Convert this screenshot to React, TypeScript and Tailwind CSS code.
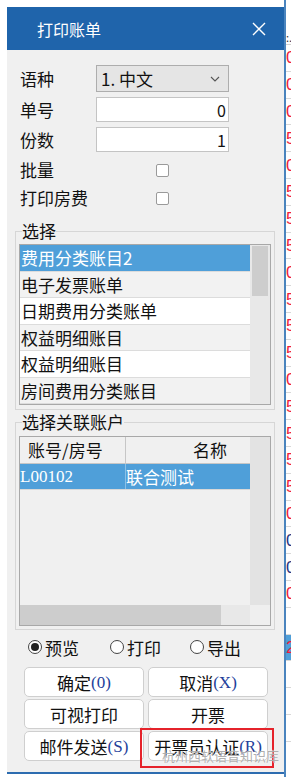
import React from "react";

const cjk = { fontFamily: '"Noto Sans CJK SC", "Noto Sans", sans-serif' };

const listItems = [
  "费用分类账目2",
  "电子发票账单",
  "日期费用分类账单",
  "权益明细账目",
  "权益明细账目",
  "房间费用分类账目",
  "房间费用明细",
];

// background grid digits peeking out on the right edge
const stripRows: { t: string; c: string; sel?: boolean }[] = [
  { t: "0", c: "text-[#f01c3c]" },
  { t: "0", c: "text-[#f01c3c]" },
  { t: "0", c: "text-[#f01c3c]" },
  { t: "5", c: "text-[#f01c3c]" },
  { t: "0", c: "text-[#f01c3c]" },
  { t: "5", c: "text-[#f01c3c]" },
  { t: "5", c: "text-[#f01c3c]" },
  { t: "5", c: "text-[#f01c3c]" },
  { t: "0", c: "text-[#f01c3c]" },
  { t: "5", c: "text-[#f01c3c]" },
  { t: "5", c: "text-[#f01c3c]" },
  { t: "5", c: "text-[#f01c3c]" },
  { t: "0", c: "text-[#f01c3c]" },
  { t: "5", c: "text-[#f01c3c]" },
  { t: "5", c: "text-[#f01c3c]" },
  { t: "5", c: "text-[#f01c3c]" },
  { t: "5", c: "text-[#f01c3c]" },
  { t: "0", c: "text-[#f01c3c]" },
  { t: "0", c: "text-[#2b3580]" },
  { t: "0", c: "text-[#2b3580]" },
  { t: "0", c: "text-[#f01c3c]" },
  { t: "", c: "" },
  { t: "2", c: "text-[#f01c3c]", sel: true },
  { t: "", c: "" },
  { t: "", c: "" },
  { t: "", c: "" },
];

function Checkbox() {
  return <div className="w-[13px] h-[13px] bg-white border border-[#9a9a9a] rounded-[2px]" />;
}

function Radio({ checked, label }: { checked?: boolean; label: string }) {
  return (
    <div className="flex items-center gap-[3px]">
      <div className="w-[14px] h-[14px] rounded-full border border-[#444] bg-white flex items-center justify-center">
        {checked && <div className="w-[8px] h-[8px] rounded-full bg-[#222]" />}
      </div>
      <span className="text-[17px] leading-none text-[#111]">{label}</span>
    </div>
  );
}

function Btn({ label, hot }: { label: string; hot?: string }) {
  return (
    <button className="h-[30px] w-[120px] bg-white border border-[#cfcfcf] rounded-[5px] flex items-center justify-center text-[17px] text-[#111] leading-none">
      <span>{label}</span>
      {hot && (
        <span className="text-[#23409a] text-[17px]" style={{ fontFamily: '"Liberation Serif", serif' }}>
          ({hot})
        </span>
      )}
    </button>
  );
}

export default function App() {
  return (
    <div className="relative w-[291px] h-[777px] bg-white flex overflow-hidden" style={cjk}>
      <div className="w-[7px] shrink-0" />

      {/* dialog */}
      <div className="mt-[7px] w-[277px] h-[767px] shrink-0 flex flex-col bg-[#f0f0f0] border-b-2 border-[#2d6cb0]">
        <div className="h-[43px] bg-[#1f64ab] flex items-center justify-between pl-[30px] pr-[18px]">
          <span className="text-white text-[16px]">打印账单</span>
          <svg width="14" height="14" viewBox="0 0 14 14">
            <path d="M1 1 L13 13 M13 1 L1 13" stroke="white" strokeWidth="1.4" />
          </svg>
        </div>

        <div className="flex-1 px-[8px] flex flex-col">
          {/* form */}
          <div className="pl-[5px] pt-[15px] flex flex-col text-[17px] text-[#111]">
            <div className="flex items-center h-[27px]">
              <span className="w-[76px]">语种</span>
              <div className="w-[133px] h-[27px] bg-[#e5e5e5] border border-[#adadad] flex items-center justify-between pl-[4px] pr-[8px]">
                <span className="text-[17px]">1. 中文</span>
                <svg width="10" height="6" viewBox="0 0 10 6">
                  <path d="M1 1 L5 5 L9 1" stroke="#555" strokeWidth="1.1" fill="none" />
                </svg>
              </div>
            </div>
            <div className="flex items-center h-[25px] mt-[5px]">
              <span className="w-[76px]">单号</span>
              <div className="w-[133px] h-[25px] bg-white border border-[#c4c4c4] flex items-center justify-end pr-[2px] text-[16px]">0</div>
            </div>
            <div className="flex items-center h-[25px] mt-[5px]">
              <span className="w-[76px]">份数</span>
              <div className="w-[133px] h-[25px] bg-white border border-[#c4c4c4] flex items-center justify-end pr-[2px] text-[16px]">1</div>
            </div>
            <div className="flex items-center h-[26px] mt-[5px]">
              <span className="w-[136px]">批量</span>
              <Checkbox />
            </div>
            <div className="flex items-center h-[26px] mt-[2px]">
              <span className="w-[136px]">打印房费</span>
              <Checkbox />
            </div>
          </div>

          {/* 选择 */}
          <fieldset className="mt-[9px] border border-[#d6d6d6] px-[3px] pb-[4px] mr-[1px]">
            <legend className="ml-[3px] text-[17px] leading-[22px] text-[#111]">选择</legend>
            <div className="mt-[2px] h-[161px] border border-[#a8a8a8] bg-white flex overflow-hidden">
              <div className="w-[230px] flex flex-col">
                {listItems.map((t, i) => (
                  <div
                    key={i}
                    className={
                      "h-[26.5px] shrink-0 flex items-center pl-[1px] text-[17px] leading-none border-b border-[#dcdcdc] whitespace-nowrap " +
                      (i === 0
                        ? "bg-[#4f9fd9] text-white"
                        : i % 2 === 1
                        ? "bg-[#f2f2f2] text-[#111]"
                        : "bg-white text-[#111]")
                    }
                  >
                    {t}
                  </div>
                ))}
              </div>
              <div className="w-[20px] bg-[#e8e8e8] pt-[1px] px-[2px]">
                <div className="h-[50px] bg-[#cdcdcd]" />
              </div>
            </div>
          </fieldset>

          {/* 选择关联账户 */}
          <fieldset className="mt-[1px] border border-[#d6d6d6] px-[3px] pb-[3px] mr-[1px]">
            <legend className="ml-[3px] text-[17px] leading-[22px] text-[#111]">选择关联账户</legend>
            <div className="mt-[3px] h-[190px] border border-[#a8a8a8] bg-[#f0f0f0] flex flex-col">
              <div className="flex flex-1">
                <div className="w-[230px] flex flex-col">
                  <div className="h-[27px] flex border-b border-[#c6c6c6] text-[17px] text-[#111]">
                    <div className="w-[106px] border-r border-[#c6c6c6] flex items-center pl-[8px]">账号/房号</div>
                    <div className="flex-1 flex items-center justify-end pr-[23px]">名称</div>
                  </div>
                  <div className="h-[26px] flex bg-[#4f9fd9] text-white text-[17px] border-b border-[#d8d8d8]">
                    <div className="w-[106px] border-r border-[#8cc0e6] flex items-center" style={{ fontFamily: '"Liberation Serif", serif' }}>
                      L00102
                    </div>
                    <div className="flex-1 flex items-center">联合测试</div>
                  </div>
                </div>
                <div className="w-[20px] bg-[#e3e3e3]" />
              </div>
              <div className="h-[20px] flex">
                <div className="w-[230px] bg-[#e8e8e8]">
                  <div className="w-[201px] h-full bg-[#cdcdcd]" />
                </div>
                <div className="w-[20px] bg-[#efefef]" />
              </div>
            </div>
          </fieldset>

          {/* radios */}
          <div className="mt-[7px] h-[20px] flex items-center pl-[13px]">
            <div className="w-[82px]">
              <Radio checked label="预览" />
            </div>
            <div className="w-[80px]">
              <Radio label="打印" />
            </div>
            <Radio label="导出" />
          </div>

          {/* buttons */}
          <div className="mt-[10px] pl-[9px] grid grid-cols-[120px_120px] gap-x-[4px] gap-y-[2px]">
            <Btn label="确定" hot="0" />
            <Btn label="取消" hot="X" />
            <Btn label="可视打印" />
            <Btn label="开票" />
            <Btn label="邮件发送" hot="S" />
            <Btn label="开票员认证" hot="R" />
          </div>
        </div>
      </div>

      {/* background grid behind the dialog */}
      <div className="flex-1 border-l-2 border-[#4a84be] flex flex-col overflow-hidden bg-white">
        <div className="h-[29px] shrink-0" />
        <div className="h-[16px] shrink-0 border-b border-[#d4d4d4] text-[11px] leading-[16px] text-[#333] whitespace-nowrap">:.</div>
        {stripRows.map((r, i) => (
          <div
            key={i}
            className={
              "h-[26.8px] shrink-0 border-b border-[#d8d8d8] flex items-center text-[17px] leading-none whitespace-nowrap " +
              r.c +
              (r.sel ? " bg-[#4f9fd9]" : "")
            }
            style={{ fontFamily: '"Liberation Sans", sans-serif' }}
          >
            {r.t}
          </div>
        ))}
      </div>

      {/* annotation overlay */}
      <div className="absolute left-[140px] top-[728px] w-[134px] h-[40px] border-2 border-[#e5232b]" />
      <div
        className="absolute left-[162px] top-[749px] text-[13px] leading-none text-[#9a9a9a]/80 whitespace-nowrap"
        style={{ textShadow: "0 0 1px #fff" }}
      >
        杭州西软语音知识库
      </div>
    </div>
  );
}
